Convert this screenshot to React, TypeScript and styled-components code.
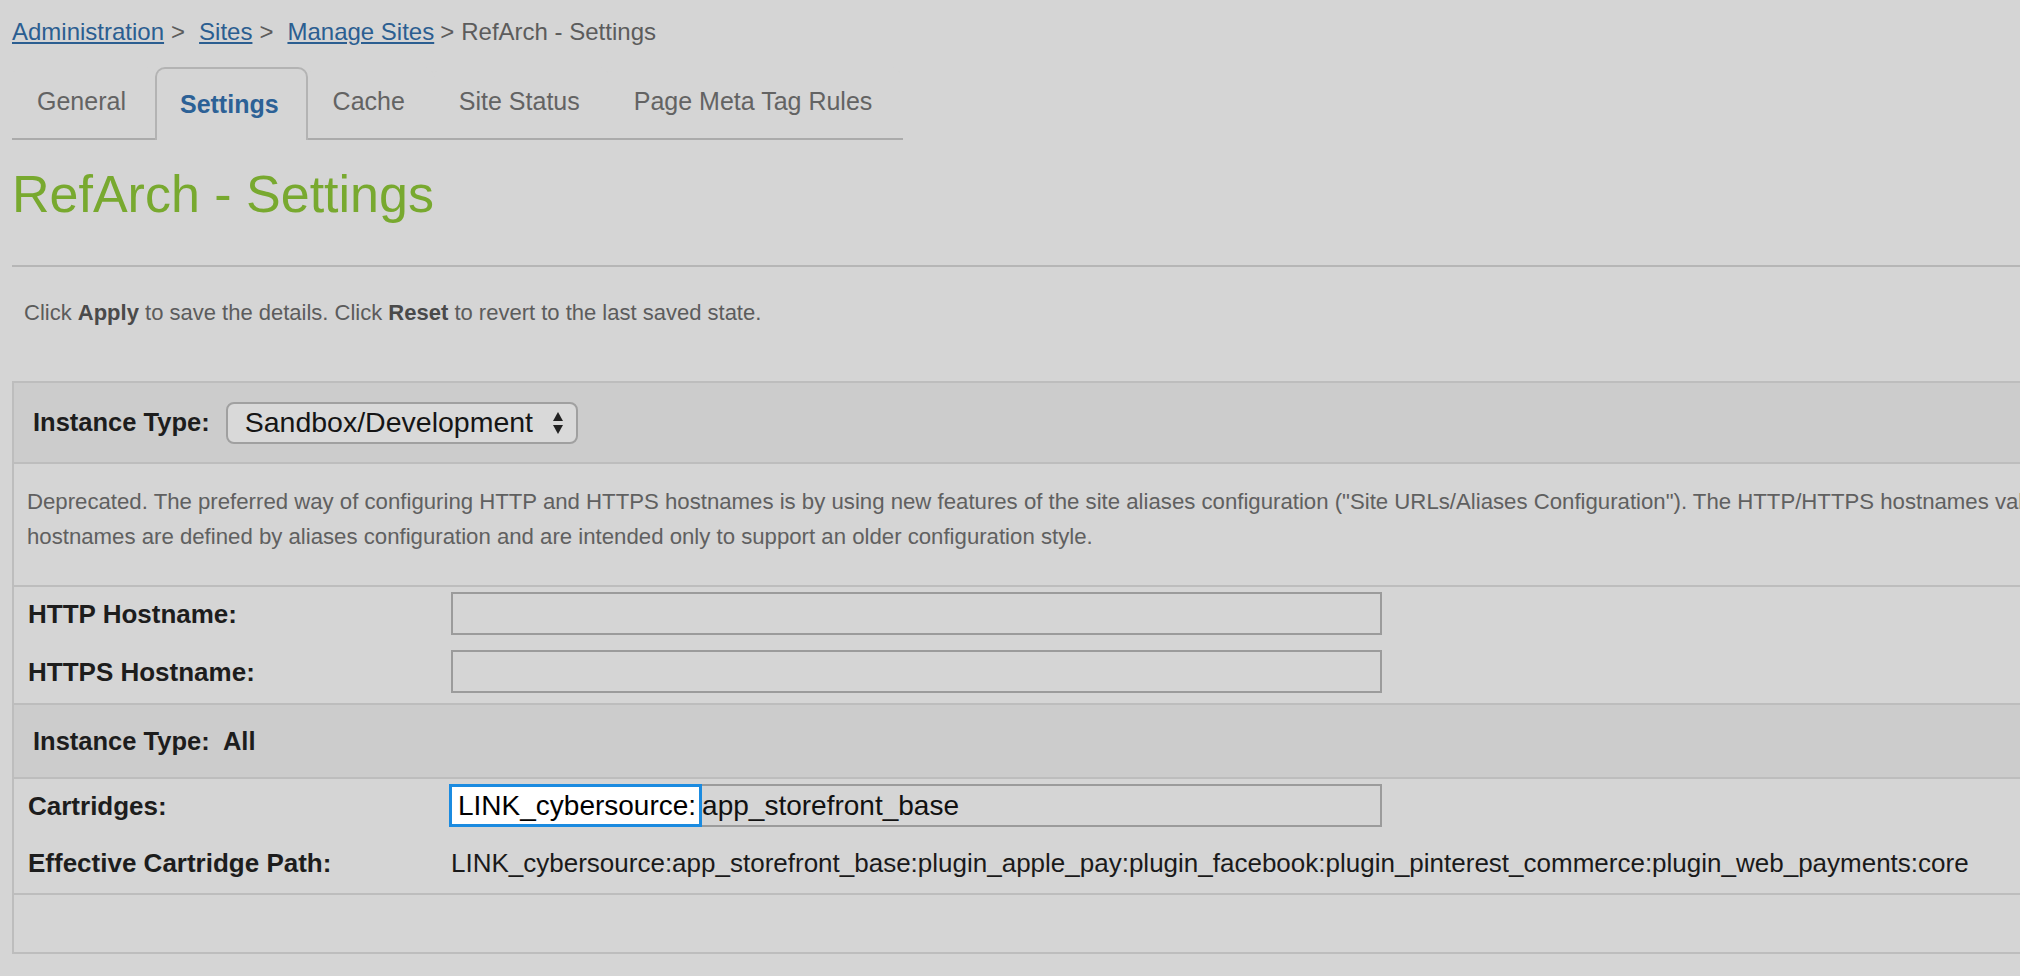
import React from "react";
import styled, { createGlobalStyle } from "styled-components";

const GlobalStyle = createGlobalStyle`
  html, body {
    margin: 0;
    padding: 0;
    background: #d5d5d5;
    overflow: hidden;
  }
  body {
    font-family: "Liberation Sans", Arial, Helvetica, sans-serif;
    color: #1d1d1d;
  }
`;

const Page = styled.div`
  width: 2120px;
  padding-left: 12px;
  box-sizing: border-box;
`;

const Breadcrumb = styled.nav`
  padding-top: 18px;
  font-size: 24px;
  line-height: 28px;
  color: #5c5c5c;
  white-space: nowrap;
`;

const Crumb = styled.a`
  color: #2b5e91;
  text-decoration: underline;
  text-underline-offset: 2px;
  cursor: pointer;
`;

const Sep = styled.span<{ $last?: boolean }>`
  margin: ${(p) => (p.$last ? "0 7px 0 6px" : "0 14px 0 7px")};
`;

const CurrentCrumb = styled.span`
  color: #5c5c5c;
`;

const TabBar = styled.div`
  margin-top: 21px;
  width: 891px;
  display: flex;
  align-items: flex-start;
  border-bottom: 2px solid #ababab;
  height: 71px;
`;

const Tab = styled.div<{ $active?: boolean }>`
  box-sizing: border-box;
  height: ${(p) => (p.$active ? "73px" : "71px")};
  padding: ${(p) => (p.$active ? "20px" : "17px")} 27px 0 23px;
  border: 2px solid ${(p) => (p.$active ? "#b3b3b3" : "transparent")};
  border-bottom: none;
  border-radius: 10px 10px 0 0;
  background: #d5d5d5;
  font-size: 25px;
  line-height: 30px;
  font-weight: ${(p) => (p.$active ? 700 : 400)};
  color: ${(p) => (p.$active ? "#2c6196" : "#636363")};
  white-space: nowrap;
  cursor: pointer;
`;

const Title = styled.h1`
  margin: 24px 0 0;
  font-size: 52px;
  line-height: 60px;
  font-weight: 400;
  color: #78a92f;
`;

const Rule = styled.div`
  margin-top: 41px;
  height: 2px;
  background: #b6b6b6;
`;

const Intro = styled.p`
  margin: 33px 0 0 12px;
  font-size: 22px;
  line-height: 26px;
  color: #5c5c5c;
  b {
    color: #4a4a4a;
  }
`;

const Box = styled.section`
  margin-top: 55px;
  border: 2px solid #bdbdbd;
`;

const Band = styled.div<{ $height: number; $first?: boolean }>`
  display: flex;
  align-items: center;
  height: ${(p) => p.$height}px;
  padding-left: 19px;
  background: #cccccc;
  border-top: ${(p) => (p.$first ? "none" : "2px solid #bdbdbd")};
`;

const BandLabel = styled.span`
  font-size: 25.5px;
  font-weight: 700;
  color: #1d1d1d;
  white-space: pre;
`;

const SelectBox = styled.div`
  box-sizing: border-box;
  margin-left: 16px;
  width: 352px;
  height: 42px;
  display: flex;
  align-items: center;
  justify-content: space-between;
  padding: 0 12px 0 17px;
  border: 2px solid #a0a0a0;
  border-radius: 8px;
  background: #d9d9d9;
  font-size: 28.5px;
  color: #151515;
`;

const Description = styled.div`
  padding: 20px 0 31px 13px;
  border-top: 2px solid #bdbdbd;
  font-size: 22.2px;
  line-height: 35px;
  color: #606060;
  white-space: nowrap;
`;

const FormSection = styled.div<{ $top: number; $bottom: number; $gap: number }>`
  display: grid;
  grid-template-columns: 423px 1fr;
  row-gap: ${(p) => p.$gap}px;
  align-items: center;
  padding: ${(p) => p.$top}px 0 ${(p) => p.$bottom}px 14px;
  border-top: 2px solid #bdbdbd;
`;

const FieldLabel = styled.span`
  font-size: 26px;
  line-height: 30px;
  font-weight: 700;
  color: #1d1d1d;
`;

const TextField = styled.div`
  box-sizing: border-box;
  width: 931px;
  height: 43px;
  border: 2px solid #9b9b9b;
  background: #d5d5d5;
  display: flex;
  align-items: stretch;
  font-size: 28px;
  color: #111;
  white-space: nowrap;
`;

const Highlight = styled.span`
  display: flex;
  align-items: center;
  margin: -2px 0 -2px -4px;
  padding: 0 3px 0 6px;
  border: 3px solid #1b8be0;
  background: #ffffff;
  color: #000;
`;

const FieldRest = styled.span`
  display: flex;
  align-items: center;
`;

const PathValue = styled.span`
  font-size: 26px;
  line-height: 30px;
  color: #1a1a1a;
  white-space: nowrap;
`;

const Spacer = styled.div`
  height: 57px;
  border-top: 2px solid #bdbdbd;
`;

const Arrows = () => (
  <svg width="12" height="26" viewBox="0 0 12 26" aria-hidden>
    <path d="M6 2 L11 11 L1 11 Z" fill="#222" />
    <path d="M6 24 L11 15 L1 15 Z" fill="#222" />
  </svg>
);

export default function App() {
  return (
    <>
      <GlobalStyle />
      <Page>
        <Breadcrumb>
          <Crumb>Administration</Crumb>
          <Sep>&gt;</Sep>
          <Crumb>Sites</Crumb>
          <Sep>&gt;</Sep>
          <Crumb>Manage Sites</Crumb>
          <Sep $last>&gt;</Sep>
          <CurrentCrumb>RefArch - Settings</CurrentCrumb>
        </Breadcrumb>

        <TabBar>
          <Tab>General</Tab>
          <Tab $active>Settings</Tab>
          <Tab>Cache</Tab>
          <Tab>Site Status</Tab>
          <Tab>Page Meta Tag Rules</Tab>
        </TabBar>

        <Title>RefArch - Settings</Title>
        <Rule />

        <Intro>
          Click <b>Apply</b> to save the details. Click <b>Reset</b> to revert to the last saved state.
        </Intro>

        <Box>
          <Band $height={79} $first>
            <BandLabel>Instance Type:</BandLabel>
            <SelectBox>
              <span>Sandbox/Development</span>
              <Arrows />
            </SelectBox>
          </Band>

          <Description>
            Deprecated. The preferred way of configuring HTTP and HTTPS hostnames is by using new features of the
            site aliases configuration ("Site URLs/Aliases Configuration"). The HTTP/HTTPS hostnames values are
            ignored if
            <br />
            hostnames are defined by aliases configuration and are intended only to support an older configuration
            style.
          </Description>

          <FormSection $top={5} $bottom={10} $gap={15}>
            <FieldLabel>HTTP Hostname:</FieldLabel>
            <TextField />
            <FieldLabel>HTTPS Hostname:</FieldLabel>
            <TextField />
          </FormSection>

          <Band $height={72}>
            <BandLabel>Instance Type:  All</BandLabel>
          </Band>

          <FormSection $top={5} $bottom={15} $gap={21}>
            <FieldLabel>Cartridges:</FieldLabel>
            <TextField>
              <Highlight>LINK_cybersource:</Highlight>
              <FieldRest>app_storefront_base</FieldRest>
            </TextField>
            <FieldLabel>Effective Cartridge Path:</FieldLabel>
            <PathValue>
              LINK_cybersource:app_storefront_base:plugin_apple_pay:plugin_facebook:plugin_pinterest_commerce:plugin_web_payments:core
            </PathValue>
          </FormSection>

          <Spacer />
        </Box>
      </Page>
    </>
  );
}
